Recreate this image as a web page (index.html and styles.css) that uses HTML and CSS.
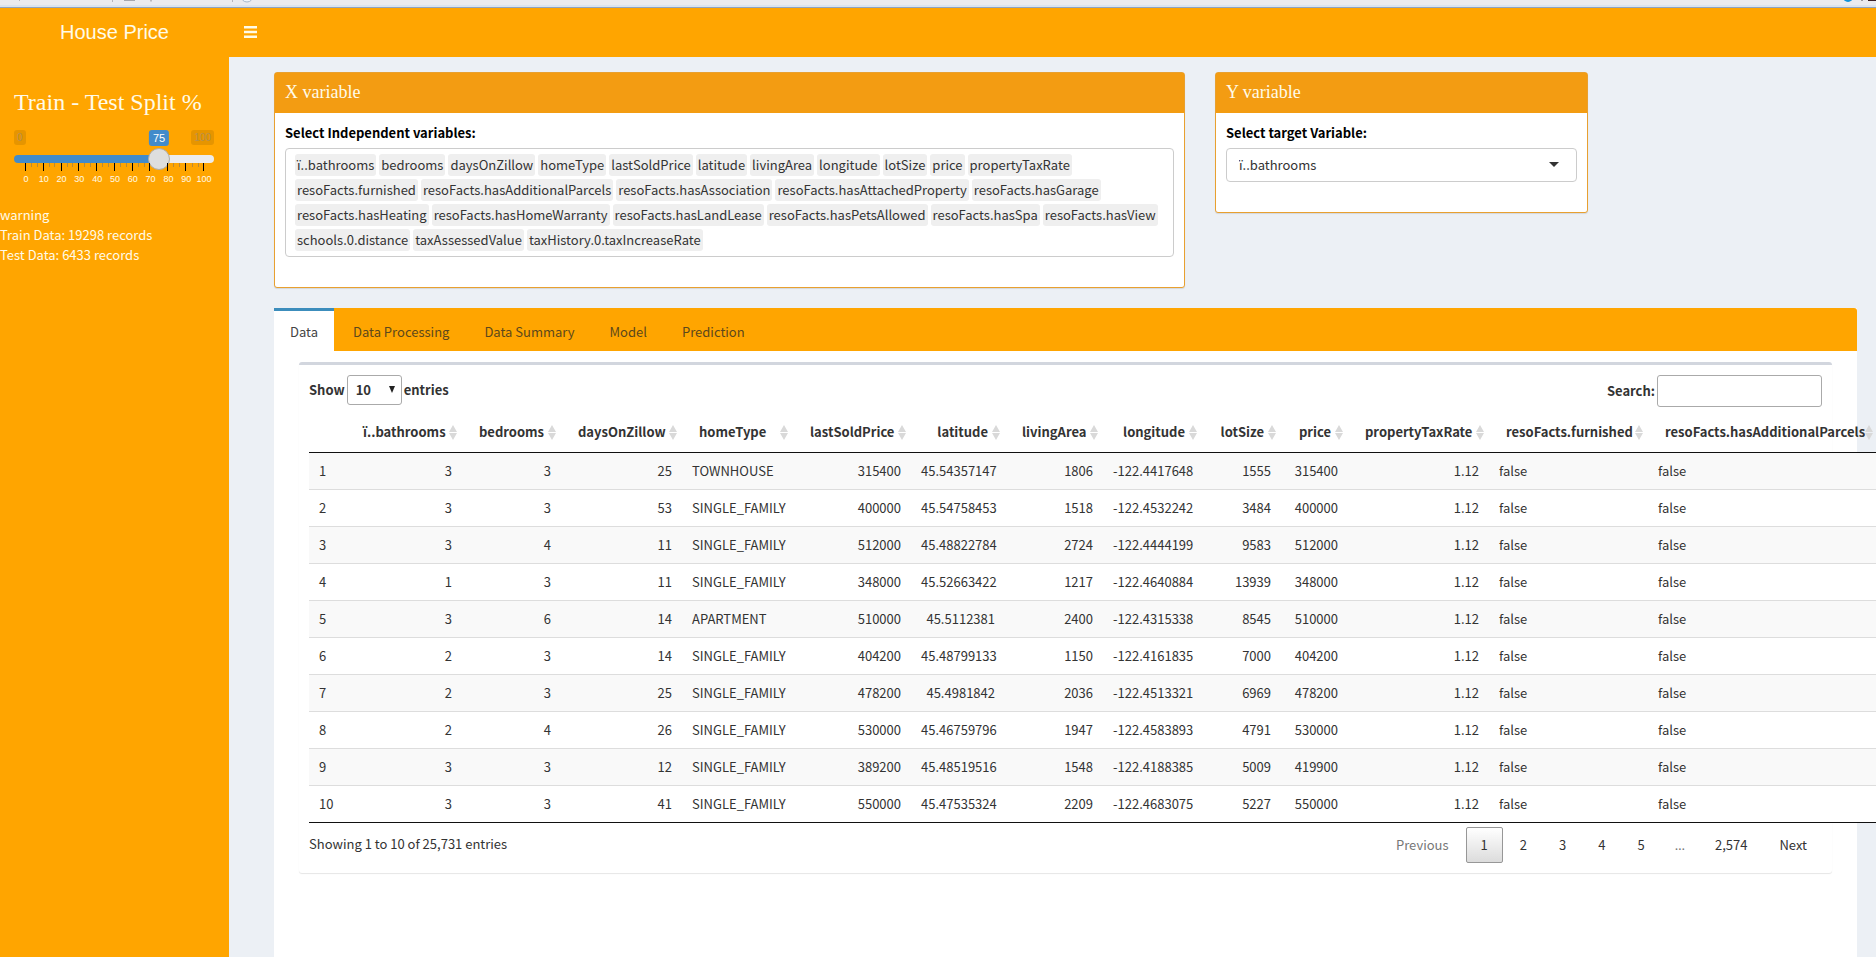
FILE: index.html
```html
<!DOCTYPE html>
<html lang="en">
<head>
<meta charset="utf-8">
<title>House Price</title>
<link rel="stylesheet" href="styles.css">
</head>
<body>
<svg class="sprite" aria-hidden="true">
  <symbol id="sort" viewBox="0 0 8 15"><path d="M4 0 8 7H0zM0 8h8l-4 7z" fill="#d9d9d9"/></symbol>
</svg>
<div class="strip">
  <svg width="260" height="6" viewBox="0 0 260 6" aria-hidden="true">
    <path d="M19.5 0v1M112.500 0v2M232.500 0v2" stroke="#b5b5bb" fill="none"/>
    <path d="M124 0h11v1h-11z" fill="#a5a7ae"/><path d="M151 0v1.500" stroke="#8b8b90"/>
    <circle cx="247" cy="-4" r="6" fill="#f2f6fb" stroke="#a6b7cb" stroke-width="1"/>
  </svg>
  <svg width="34" height="6" viewBox="0 0 34 6" aria-hidden="true">
    <circle cx="6" cy="-3" r="5" fill="#1193dc"/>
    <path d="M20 0v1" stroke="#9a9a9e" stroke-width="2"/><path d="M26 0h8v1h-8z" fill="#3a2026"/>
  </svg>
</div>
<header class="topbar">
  <a class="logo" href="#">House Price</a>
  <button class="toggle" aria-label="Toggle navigation">
    <svg width="13" height="12" viewBox="0 0 13 12" aria-hidden="true"><path d="M0 0h13v2.600H0zM0 4.700h13v2.600H0zM0 9.400h13v2.600H0z" fill="#fffbe8"/></svg>
  </button>
</header>
<div class="layout">
  <aside class="sidebar">
    <label class="split-title" for="split">Train - Test Split %</label>
    <div class="slider">
      <div class="bounds"><span>0</span><span>100</span></div>
      <output class="bubble" for="split" style="left:72.5%">75</output>
      <input id="split" type="range" min="0" max="100" value="75">
      <svg class="ticks" viewBox="0 0 200 9" height="9" aria-hidden="true">
        <path d="M17.500 0v4M23.500 0v4M35.500 0v4M40.500 0v4M53.500 0v4M58.500 0v4M70.500 0v4M76.500 0v4M88.500 0v4M94.500 0v4M106.500 0v4M112.500 0v4M124.500 0v4M130.500 0v4M165.500 0v4M159.500 0v4M178.500 0v4M184.500 0v4" stroke="#b98a35"/>
        <path d="M11.500 0v8M29.500 0v8M47.500 0v8M64.500 0v8M82.500 0v8M100.500 0v8M118.500 0v8M135.500 0v8M153.500 0v8M171.500 0v8M189.500 0v8" stroke="#000"/>
      </svg>
      <div class="scale"><span>0</span><span>10</span><span>20</span><span>30</span><span>40</span><span>50</span><span>60</span><span>70</span><span>80</span><span>90</span><span>100</span></div>
    </div>
    <div class="notes"><p>warning</p><p>Train Data: 19298 records</p><p>Test Data: 6433 records</p></div>
  </aside>
  <main class="content">
    <div class="boxes">
      <section class="box">
        <h3>X variable</h3>
        <div class="box-body">
          <p class="label" id="xlabel">Select Independent variables:</p>
          <div class="chips" role="group" aria-labelledby="xlabel">
            <span>ï..bathrooms</span><span>bedrooms</span><span>daysOnZillow</span><span>homeType</span><span>lastSoldPrice</span><span>latitude</span><span>livingArea</span><span>longitude</span><span>lotSize</span><span>price</span><span>propertyTaxRate</span><span>resoFacts.furnished</span><span>resoFacts.hasAdditionalParcels</span><span>resoFacts.hasAssociation</span><span>resoFacts.hasAttachedProperty</span><span>resoFacts.hasGarage</span><span>resoFacts.hasHeating</span><span>resoFacts.hasHomeWarranty</span><span>resoFacts.hasLandLease</span><span>resoFacts.hasPetsAllowed</span><span>resoFacts.hasSpa</span><span>resoFacts.hasView</span><span>schools.0.distance</span><span>taxAssessedValue</span><span>taxHistory.0.taxIncreaseRate</span>
          </div>
        </div>
      </section>
      <section class="box">
        <h3>Y variable</h3>
        <div class="box-body">
          <label class="label" for="target">Select target Variable:</label>
          <div class="target">
            <select id="target"><option>ï..bathrooms</option></select>
            <svg width="10" height="5" viewBox="0 0 10 5" aria-hidden="true"><path d="M0 0h10L5 5z" fill="#333"/></svg>
          </div>
        </div>
      </section>
    </div>
    <section class="tabs">
      <nav class="tablist">
        <a class="active" href="#">Data</a><a href="#">Data Processing</a><a href="#">Data Summary</a><a href="#">Model</a><a href="#">Prediction</a>
      </nav>
      <div class="panel">
        <div class="controls">
          <div class="length"><label for="len">Show</label>
            <span class="len"><select id="len"><option>10</option></select><svg width="6" height="7" viewBox="0 0 6 7" aria-hidden="true"><path d="M0 0h6L3 7z" fill="#222"/></svg></span>
            <label for="len">entries</label></div>
          <div class="length"><label for="search">Search:</label><input id="search" type="search"></div>
        </div>
        <table>
          <colgroup><col class="w0"><col class="w1"><col class="w2"><col class="w3"><col class="w4"><col class="w5"><col class="w6"><col class="w7"><col class="w8"><col class="w9"><col class="w10"><col class="w11"><col class="w12"><col class="w13"></colgroup>
          <thead><tr>
            <th></th>
            <th>ï..bathrooms<svg><use href="#sort"/></svg></th>
            <th>bedrooms<svg><use href="#sort"/></svg></th>
            <th>daysOnZillow<svg><use href="#sort"/></svg></th>
            <th class="t">homeType<svg><use href="#sort"/></svg></th>
            <th>lastSoldPrice<svg><use href="#sort"/></svg></th>
            <th>latitude<svg><use href="#sort"/></svg></th>
            <th>livingArea<svg><use href="#sort"/></svg></th>
            <th>longitude<svg><use href="#sort"/></svg></th>
            <th>lotSize<svg><use href="#sort"/></svg></th>
            <th>price<svg><use href="#sort"/></svg></th>
            <th>propertyTaxRate<svg><use href="#sort"/></svg></th>
            <th class="t">resoFacts.furnished<svg><use href="#sort"/></svg></th>
            <th class="t">resoFacts.hasAdditionalParcels<svg><use href="#sort"/></svg></th>
          </tr></thead>
          <tbody>
            <tr><td class="t">1</td><td>3</td><td>3</td><td>25</td><td class="t">TOWNHOUSE</td><td>315400</td><td>45.54357147</td><td>1806</td><td>-122.4417648</td><td>1555</td><td>315400</td><td>1.12</td><td class="t">false</td><td class="t">false</td></tr>
            <tr><td class="t">2</td><td>3</td><td>3</td><td>53</td><td class="t">SINGLE_FAMILY</td><td>400000</td><td>45.54758453</td><td>1518</td><td>-122.4532242</td><td>3484</td><td>400000</td><td>1.12</td><td class="t">false</td><td class="t">false</td></tr>
            <tr><td class="t">3</td><td>3</td><td>4</td><td>11</td><td class="t">SINGLE_FAMILY</td><td>512000</td><td>45.48822784</td><td>2724</td><td>-122.4444199</td><td>9583</td><td>512000</td><td>1.12</td><td class="t">false</td><td class="t">false</td></tr>
            <tr><td class="t">4</td><td>1</td><td>3</td><td>11</td><td class="t">SINGLE_FAMILY</td><td>348000</td><td>45.52663422</td><td>1217</td><td>-122.4640884</td><td>13939</td><td>348000</td><td>1.12</td><td class="t">false</td><td class="t">false</td></tr>
            <tr><td class="t">5</td><td>3</td><td>6</td><td>14</td><td class="t">APARTMENT</td><td>510000</td><td>45.5112381</td><td>2400</td><td>-122.4315338</td><td>8545</td><td>510000</td><td>1.12</td><td class="t">false</td><td class="t">false</td></tr>
            <tr><td class="t">6</td><td>2</td><td>3</td><td>14</td><td class="t">SINGLE_FAMILY</td><td>404200</td><td>45.48799133</td><td>1150</td><td>-122.4161835</td><td>7000</td><td>404200</td><td>1.12</td><td class="t">false</td><td class="t">false</td></tr>
            <tr><td class="t">7</td><td>2</td><td>3</td><td>25</td><td class="t">SINGLE_FAMILY</td><td>478200</td><td>45.4981842</td><td>2036</td><td>-122.4513321</td><td>6969</td><td>478200</td><td>1.12</td><td class="t">false</td><td class="t">false</td></tr>
            <tr><td class="t">8</td><td>2</td><td>4</td><td>26</td><td class="t">SINGLE_FAMILY</td><td>530000</td><td>45.46759796</td><td>1947</td><td>-122.4583893</td><td>4791</td><td>530000</td><td>1.12</td><td class="t">false</td><td class="t">false</td></tr>
            <tr><td class="t">9</td><td>3</td><td>3</td><td>12</td><td class="t">SINGLE_FAMILY</td><td>389200</td><td>45.48519516</td><td>1548</td><td>-122.4188385</td><td>5009</td><td>419900</td><td>1.12</td><td class="t">false</td><td class="t">false</td></tr>
            <tr><td class="t">10</td><td>3</td><td>3</td><td>41</td><td class="t">SINGLE_FAMILY</td><td>550000</td><td>45.47535324</td><td>2209</td><td>-122.4683075</td><td>5227</td><td>550000</td><td>1.12</td><td class="t">false</td><td class="t">false</td></tr>
          </tbody>
        </table>
        <div class="foot">
          <p>Showing 1 to 10 of 25,731 entries</p>
          <nav class="pages"><button class="muted">Previous</button><button class="current">1</button><button>2</button><button>3</button><button>4</button><button>5</button><span>…</span><button>2,574</button><button>Next</button></nav>
        </div>
      </div>
    </section>
  </main>
</div>
</body>
</html>
```
FILE: styles.css
```css
* { box-sizing: border-box; }
body {
  margin: 0;
  min-height: 100vh;
  display: flex;
  flex-direction: column;
  overflow: hidden;
  background: #ecf0f5;
  color: #333;
  font: 13px/20px "Noto Sans CJK SC", "Noto Sans", sans-serif;
}
p, h3 { margin: 0; }
a { color: inherit; text-decoration: none; }
button, input, select { font: inherit; color: inherit; margin: 0; }
.sprite { position: absolute; width: 0; height: 0; }

.strip {
  height: 8px;
  display: flex;
  justify-content: space-between;
  background: #ebebee;
  border-bottom: 1px solid #8fa3c0;
  box-shadow: inset 0 -2px #dbe4ee;
}
.topbar { display: flex; align-items: center; height: 49px; padding-bottom: 1px; background: #ffa500; }
.logo {
  width: 229px;
  text-align: center;
  color: #fffbe8;
  font: 20px/40px "Liberation Sans", Arial, sans-serif;
}
.toggle { display: flex; padding: 12px 15px; border: 0; background: none; }

.layout { flex: 1; display: flex; }
.sidebar { flex: 0 0 229px; padding-top: 31px; background: #ffa500; color: #fffbe8; }
.split-title {
  display: block;
  margin: 0 14px;
  font: 24px/28px "Liberation Serif", "Times New Roman", serif;
  white-space: nowrap;
}
.slider { position: relative; margin: 14px 15px 0 14px; }
.bounds {
  display: flex;
  justify-content: space-between;
  font: 10px/15px "Liberation Sans", Arial, sans-serif;
  color: #b89048;
}
.bounds span { padding: 0 3px; background: #e69500; border-radius: 3px; }
.bubble {
  position: absolute;
  top: 0;
  transform: translateX(-50%);
  padding: 0 4px;
  border-radius: 3px;
  background: #428bca;
  color: #fff;
  font: 11px/16px "Liberation Sans", Arial, sans-serif;
}
#split {
  appearance: none;
  display: block;
  width: 100%;
  height: 8px;
  margin: 10px 0 0;
  border-radius: 4px;
  background: linear-gradient(90deg, #428bca 72%, #ececec 72%);
}
#split::-webkit-slider-thumb {
  appearance: none;
  width: 22px;
  height: 22px;
  border: 1px solid #b0aca4;
  border-radius: 50%;
  background: #dedede;
}
.ticks { display: block; width: 100%; }
.scale {
  display: grid;
  grid-template-columns: repeat(11, 1fr);
  margin: 0 1px 0 3px;
  text-align: center;
  font: 9px/14px "Liberation Sans", Arial, sans-serif;
}
.notes { margin-top: 19px; }

.content { flex: 1; min-width: 0; display: flex; flex-direction: column; padding: 15px 19px 0 45px; }
.boxes {
  display: grid;
  grid-template-columns: 911fr 373fr 239fr;
  gap: 30px;
  align-items: start;
}
.box {
  border: 1px solid #e8a030;
  border-radius: 3px;
  background: #fff;
  box-shadow: 0 1px 1px rgba(0, 0, 0, .1);
}
.box h3 {
  padding: 9px 10px 11px;
  background: #f39c12;
  color: #fffbe8;
  font: 18px/20px "Liberation Serif", "Times New Roman", serif;
}
.box-body { padding: 10px 10px 30px; color: #000; }
.label { display: block; margin-bottom: 5px; font-weight: 700; }
.chips {
  display: flex;
  flex-wrap: wrap;
  gap: 3px;
  padding: 5px 9px;
  border: 1px solid #ccc;
  border-radius: 4px;
  color: #333;
}
.chips span { padding: 1px 2px; border-radius: 3px; background: #efefef; }
.target { position: relative; }
.target select {
  appearance: none;
  display: block;
  width: 100%;
  height: 34px;
  padding: 0 12px;
  border: 1px solid #ccc;
  border-radius: 4px;
  background: #fff;
  color: #333;
}
.target svg { position: absolute; right: 18px; top: 14px; }

.tabs { flex: 1; margin-top: 20px; background: #fff; }
.tablist { display: flex; gap: 3px; height: 43px; background: #ffa500; color: #5c481c; border-radius: 0 3px 0 0; }
.tablist a { padding: 11px 16px 9px; border-top: 3px solid transparent; }
.tablist .active { background: #fff; border-color: #3c8dbc; color: #444; }

.panel {
  margin: 11px 25px 0;
  padding: 10px;
  border-top: 3px solid #d2d6de;
  border-radius: 3px;
  box-shadow: 0 1px 1px rgba(0, 0, 0, .1);
}
.controls { display: flex; justify-content: space-between; align-items: flex-start; font-weight: 700; }
.length { display: flex; align-items: center; gap: 2px; }
.len { position: relative; }
.len select {
  appearance: none;
  display: block;
  width: 55px;
  height: 30px;
  padding: 0 8px;
  border: 1px solid #aaa;
  border-radius: 3px;
  background: #fff;
}
.len svg { position: absolute; right: 7px; top: 11px; }
#search { width: 165px; height: 32px; border: 1px solid #aaa; border-radius: 3px; background: #fff; }

table { table-layout: fixed; width: 1569px; margin-top: 5px; border-collapse: separate; border-spacing: 0; border-bottom: 1px solid #111; }
th, td { padding: 8px 10px; text-align: right; white-space: nowrap; }
th { position: relative; padding: 10px 17px; border-bottom: 1px solid #111; }
th svg { position: absolute; right: 5px; top: 13px; width: 8px; height: 15px; }
td { border-top: 1px solid #ddd; background: #fff; }
.t { text-align: left; }
tbody tr:first-child td { border-top: 0; }
tbody tr:nth-child(odd) td { background: #f9f9f9; }
.w0 { width: 37px; } .w1 { width: 116px; } .w2 { width: 99px; } .w3 { width: 121px; }
.w4 { width: 111px; } .w5 { width: 118px; } .w6 { width: 94px; } .w7 { width: 98px; }
.w8 { width: 99px; } .w9 { width: 79px; } .w10 { width: 67px; } .w11 { width: 141px; }
.w12 { width: 159px; } .w13 { width: 230px; }

.foot { display: flex; justify-content: space-between; }
.foot p { padding-top: 11px; }
.pages { display: flex; gap: 2px; padding-top: 4px; }
.pages button, .pages span { height: 36px; padding: 7px 14px; border: 1px solid transparent; border-radius: 2px; background: none; }
.pages .muted, .pages span { color: #777; }
.pages span { padding: 7px 12px; font-family: "Noto Sans", sans-serif; }
.pages .current { border-color: #979797; background: linear-gradient(#fff, #dcdcdc); }
```
